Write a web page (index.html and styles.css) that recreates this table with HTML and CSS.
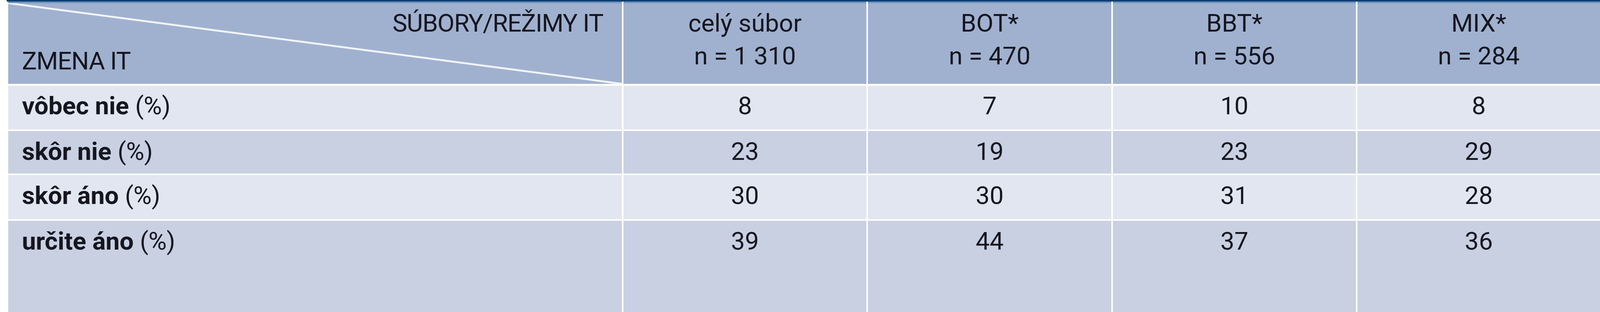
FILE: index.html
```html
<!DOCTYPE html>
<html lang="sk">
<head>
<meta charset="utf-8">
<title>Zmena IT</title>
<link rel="stylesheet" href="styles.css">
</head>
<body>
<div class="table-wrap">
  <div class="grid">
    <div class="cell head corner">
      <div class="corner-top">SÚBORY/REŽIMY IT</div>
      <div class="corner-bottom">ZMENA IT</div>
    </div>
    <div class="cell head num">celý súbor<br>n = 1 310</div>
    <div class="cell head num">BOT*<br>n = 470</div>
    <div class="cell head num">BBT*<br>n = 556</div>
    <div class="cell head num">MIX*<br>n = 284</div>

    <div class="cell odd label"><b>vôbec nie</b> (%)</div>
    <div class="cell odd num">8</div>
    <div class="cell odd num">7</div>
    <div class="cell odd num">10</div>
    <div class="cell odd num">8</div>

    <div class="cell even label"><b>skôr nie</b> (%)</div>
    <div class="cell even num">23</div>
    <div class="cell even num">19</div>
    <div class="cell even num">23</div>
    <div class="cell even num">29</div>

    <div class="cell odd label"><b>skôr áno</b> (%)</div>
    <div class="cell odd num">30</div>
    <div class="cell odd num">30</div>
    <div class="cell odd num">31</div>
    <div class="cell odd num">28</div>

    <div class="cell even label"><b>určite áno</b> (%)</div>
    <div class="cell even num">39</div>
    <div class="cell even num">44</div>
    <div class="cell even num">37</div>
    <div class="cell even num">36</div>
  </div>
</div>
</body>
</html>
```
FILE: styles.css
```css
:root {
  /* one reference pixel, relative to the 4884px wide frame */
  --px: calc(100vw / 4884);
}

html, body {
  margin: 0;
  padding: 0;
  height: 100%;
  background: #ffffff;
  overflow: hidden;
}

body {
  font-family: Roboto, "Liberation Sans", sans-serif;
  font-size: calc(76 * var(--px));
  color: #15161f;
}

.table-wrap {
  box-sizing: border-box;
  height: 100%;
  margin-left: calc(20 * var(--px));
  border-top: calc(5 * var(--px)) solid #0d3e70;
}

.grid {
  height: 100%;
  display: grid;
  grid-template-columns:
    calc(1873 * var(--px))
    calc(742 * var(--px))
    calc(742 * var(--px))
    calc(742 * var(--px))
    minmax(0, 1fr);
  grid-template-rows:
    calc(252 * var(--px))
    calc(134 * var(--px))
    calc(130 * var(--px))
    calc(134 * var(--px))
    minmax(calc(124 * var(--px)), 1fr);
  gap: calc(5 * var(--px));
  padding-left: calc(5 * var(--px));
  background: #ffffff;
}

.cell {
  line-height: calc(100 * var(--px));
  white-space: nowrap;
  overflow: hidden;
}

.head {
  background: #a0b1cf;
  border-top: calc(5 * var(--px)) solid #6f93c1;
  padding-top: calc(12 * var(--px));
}

.head.num {
  text-align: center;
}

.corner {
  background:
    linear-gradient(to top right,
      rgba(255,255,255,0) calc(50% - 4 * var(--px)),
      #f6f8fd calc(50% - 1.5 * var(--px)),
      #f6f8fd calc(50% + 1.5 * var(--px)),
      rgba(255,255,255,0) calc(50% + 4 * var(--px))),
    #a0b1cf;
  display: flex;
  flex-direction: column;
  padding-left: calc(42 * var(--px));
  padding-right: calc(57 * var(--px));
}

.corner-top {
  text-align: right;
  letter-spacing: calc(-1.5 * var(--px));
}

.corner-bottom {
  margin-top: calc(15 * var(--px));
  letter-spacing: calc(-1.5 * var(--px));
}

.odd {
  background: #e2e6f0;
}

.even {
  background: #c8d0e2;
}

.label {
  padding-left: calc(42 * var(--px));
  padding-top: calc(13 * var(--px));
}

.label b {
  font-weight: 700;
}

.odd.num, .even.num {
  text-align: center;
  padding-top: calc(13 * var(--px));
}
```
